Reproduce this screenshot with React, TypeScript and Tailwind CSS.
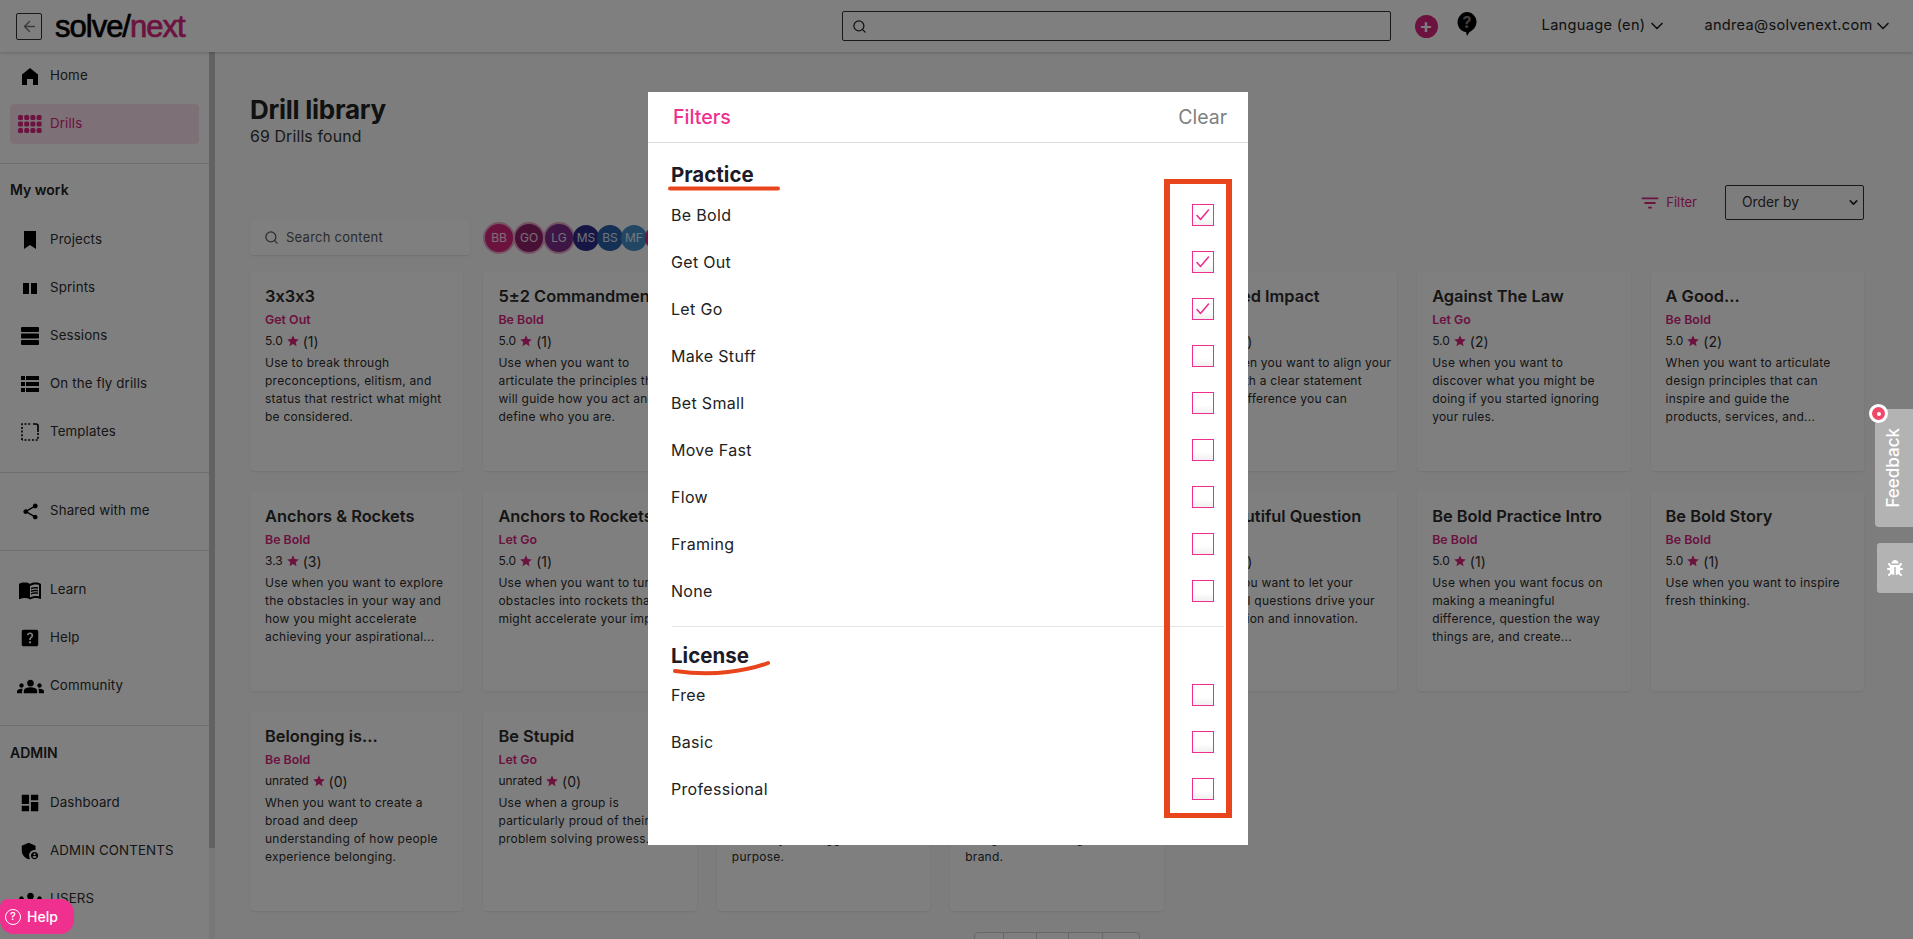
import React from 'react';
import { ArrowLeft, ChevronDown, Search } from 'lucide-react';
import { FaBug } from 'react-icons/fa';
import { MdAdminPanelSettings, MdDashboard, MdFilterList, MdGroups, MdHelpCenter, MdMenuBook, MdShare, MdStar } from 'react-icons/md';

type Drill = { title: string; tag: string; score: string; count: number; lines: string[] };

const drills: Drill[] = [
  { title: '3x3x3', tag: 'Get Out', score: '5.0', count: 1, lines: ['Use to break through', 'preconceptions, elitism, and', 'status that restrict what might', 'be considered.'] },
  { title: '5±2 Commandments', tag: 'Be Bold', score: '5.0', count: 1, lines: ['Use when you want to', 'articulate the principles that', 'will guide how you act and', 'define who you are.'] },
  { title: 'A Brand Story', tag: 'Be Bold', score: '5.0', count: 1, lines: ['Use when you want to tell', 'the story of your team', 'and how it came to be', 'here.'] },
  { title: 'A Clear Purpose', tag: 'Be Bold', score: '5.0', count: 1, lines: ['Use when you want to', 'define a clear direction', 'for your team and', 'purpose.'] },
  { title: 'Defined Impact', tag: 'Be Bold', score: '5.0', count: 1, lines: ['Use when you want to align your', 'team with a clear statement', 'of the difference you can', 'make.'] },
  { title: 'Against The Law', tag: 'Let Go', score: '5.0', count: 2, lines: ['Use when you want to', 'discover what you might be', 'doing if you started ignoring', 'your rules.'] },
  { title: 'A Good...', tag: 'Be Bold', score: '5.0', count: 2, lines: ['When you want to articulate', 'design principles that can', 'inspire and guide the', 'products, services, and...'] },
  { title: 'Anchors & Rockets', tag: 'Be Bold', score: '3.3', count: 3, lines: ['Use when you want to explore', 'the obstacles in your way and', 'how you might accelerate', 'achieving your aspirational...'] },
  { title: 'Anchors to Rockets', tag: 'Let Go', score: '5.0', count: 1, lines: ['Use when you want to turn', 'obstacles into rockets that', 'might accelerate your impact.'] },
  { title: 'Assumption Flip', tag: 'Let Go', score: '5.0', count: 1, lines: ['Use when you want to flip', 'the beliefs that hold you', 'back from new ideas.'] },
  { title: 'Bad Ideas', tag: 'Get Out', score: '5.0', count: 1, lines: ['Use when you want to', 'open up your thinking', 'and find better ideas.'] },
  { title: 'A Beautiful Question', tag: 'Be Bold', score: '5.0', count: 1, lines: ['When you want to let your', 'powerful questions drive your', 'exploration and innovation.'] },
  { title: 'Be Bold Practice Intro', tag: 'Be Bold', score: '5.0', count: 1, lines: ['Use when you want focus on', 'making a meaningful', 'difference, question the way', 'things are, and create...'] },
  { title: 'Be Bold Story', tag: 'Be Bold', score: '5.0', count: 1, lines: ['Use when you want to inspire', 'fresh thinking.'] },
  { title: 'Belonging is...', tag: 'Be Bold', score: 'unrated', count: 0, lines: ['When you want to create a', 'broad and deep', 'understanding of how people', 'experience belonging.'] },
  { title: 'Be Stupid', tag: 'Let Go', score: 'unrated', count: 0, lines: ['Use when a group is', 'particularly proud of their', 'problem solving prowess.'] },
  { title: 'Be The Change', tag: 'Be Bold', score: '5.0', count: 1, lines: ['Use when you want to', 'connect what you do', 'each day to a bigger', 'purpose.'] },
  { title: 'Big Brand Bets', tag: 'Be Bold', score: '5.0', count: 1, lines: ['Use when you want to', 'test what sets you apart', 'and grow the strength of', 'brand.'] },
];

const practices = ['Be Bold', 'Get Out', 'Let Go', 'Make Stuff', 'Bet Small', 'Move Fast', 'Flow', 'Framing', 'None'];
const licenses = ['Free', 'Basic', 'Professional'];

const HomeIcon = () => (
  <svg width="16" height="17" viewBox="0 0 16 17" fill="currentColor"><path d="M8 0 16 6.5V17H11V11H5V17H0V6.5Z" /></svg>
);
const BookmarkIcon = () => (
  <svg width="14" height="18" viewBox="0 0 14 18" fill="currentColor"><path d="M1 0H13V18L7 14 1 18Z" /></svg>
);
const SprintIcon = () => (
  <svg width="14" height="11" viewBox="0 0 14 11" fill="currentColor"><rect width="6" height="11" /><rect x="8" width="6" height="11" /></svg>
);
const SessionIcon = () => (
  <svg width="18" height="18" viewBox="0 0 18 18" fill="currentColor"><rect width="18" height="5" rx="1" /><rect y="6.5" width="18" height="5" rx="1" /><rect y="13" width="18" height="5" rx="1" /></svg>
);
const ListIcon = () => (
  <svg width="18" height="16" viewBox="0 0 18 16" fill="currentColor">
    <rect width="4" height="4" /><rect x="5" width="13" height="4" />
    <rect y="6" width="4" height="4" /><rect x="5" y="6" width="13" height="4" />
    <rect y="12" width="4" height="4" /><rect x="5" y="12" width="13" height="4" />
  </svg>
);
const TemplateIcon = () => (
  <svg width="18" height="18" viewBox="0 0 18 18" fill="none" stroke="currentColor" strokeWidth="1.6">
    <path d="M1 17V1H11" strokeDasharray="2 1.7" />
    <path d="M12 1H15Q17 1 17 3V9" />
    <path d="M17 10V17H1" strokeDasharray="2 1.7" />
  </svg>
);
const DrillsIcon = () => (
  <svg width="24" height="18" viewBox="0 0 24 18" fill="currentColor">
    {[0, 6.5, 13].map(y => [0, 6.2, 12.4, 18.6].map(x => <rect key={`${x}-${y}`} x={x} y={y} width="5" height="5" rx="1.5" />))}
  </svg>
);
const QuestionBubble = () => (
  <svg width="20" height="24" viewBox="0 0 20 24">
    <path d="M10 0C15 0 19.5 4.5 19.5 10S15 19 12.5 20L10 24 9 20C4 19.5.5 15 .5 10S5 0 10 0Z" fill="#000" />
    <text x="10" y="16" textAnchor="middle" fontSize="16" fontWeight="700" fill="#808080" fontFamily="Inter, sans-serif">?</text>
  </svg>
);

const NavRow = ({ icon, label, active }: { icon: React.ReactNode; label: string; active?: boolean }) => (
  <div className="h-[48px] flex items-center px-[10px]">
    <div className={`w-[190px] h-[40px] rounded-[4px] flex items-center ${active ? 'bg-[#fbe0ed] text-[#d8247f]' : 'text-[#2c2c2c]'}`}>
      <span className={`w-[40px] flex justify-center shrink-0 ${active ? '' : 'text-black'}`}>{icon}</span>
      <span className="text-[13.3px] tracking-[0.01em]">{label}</span>
    </div>
  </div>
);

const Card = ({ drill }: { drill: Drill }) => (
  <div className="bg-white rounded-[4px] shadow-[0_1px_2px_rgba(0,0,0,0.08)] px-[15px] pt-[13px] overflow-hidden">
    <h3 className="h-[24px] leading-[24px] text-[16.4px] font-semibold text-[#2b2b2b] whitespace-nowrap">{drill.title}</h3>
    <p className="h-[23px] leading-[23px] text-[12.4px] font-semibold text-[#d8247f]">{drill.tag}</p>
    <div className="mt-[1px] h-[18px] flex items-center gap-[3px] text-[12px] text-[#2b2b2b]">
      <span>{drill.score}</span>
      <MdStar className="w-[14px] h-[14px] text-[#d8247f]" />
      <span className="text-[14px]">({drill.count})</span>
    </div>
    <div className="mt-[4px] text-[12px] leading-[18px] text-[#2b2b2b] tracking-[0.02em]">
      {drill.lines.map(line => <div key={line} className="whitespace-nowrap">{line}</div>)}
    </div>
  </div>
);

const Avatar = ({ text, color, selected }: { text: string; color: string; selected?: boolean }) => (
  <div className={`shrink-0 rounded-full flex items-center justify-center text-[12px] text-white/85 ${selected ? 'w-[32px] h-[32px] -mr-[2px] border-2 border-[#e9a8c8]' : 'w-[26px] h-[26px] -mr-[2px]'}`} style={{ backgroundColor: color }}>
    {text}
  </div>
);

const FilterRow = ({ label, checked }: { label: string; checked?: boolean }) => (
  <div className="h-[47px] flex items-center justify-between pr-[10px]">
    <span className="text-[16px] text-[#222] tracking-[0.02em]">{label}</span>
    <span className="w-[22px] h-[22px] border border-[#ee2f8f] bg-gradient-to-b from-white from-60% to-[#efefef] flex items-center justify-center">
      {checked && (
        <svg width="14" height="12" viewBox="0 0 14 12" fill="none" stroke="#ee2f8f" strokeWidth="1.6" strokeLinecap="round" strokeLinejoin="round"><path d="M1 6.5 4.5 10.5 12.5 1" /></svg>
      )}
    </span>
  </div>
);

const App = () => {
  return (
    <div className="relative w-full h-[939px] overflow-hidden bg-[#fafafa] font-[Inter,sans-serif] [font-feature-settings:'calt'_0]">
      <header className="relative z-10 h-[52px] bg-white shadow-[0_1px_3px_rgba(0,0,0,0.2)] flex items-center pl-[16px]">
        <button className="w-[26px] h-[27px] border border-[#333] rounded-[2px] flex items-center justify-center text-[#777]"><ArrowLeft className="w-[17px] h-[17px]" /></button>
        <div className="ml-[13px] text-[31px] tracking-[-1px] leading-none font-['Liberation_Sans',sans-serif] [-webkit-text-stroke:0.7px] text-black">solve/<span className="text-[#d8247f]">next</span></div>
        <div className="ml-[657px] w-[549px] h-[30px] border border-[#333] rounded-[2px] bg-white flex items-center pl-[9px]"><Search className="w-[15px] h-[15px] text-[#222]" /></div>
        <span className="ml-[24px] w-[23px] h-[23px] rounded-full bg-[#d8247f] flex items-center justify-center text-white text-[20px] leading-none font-semibold">+</span>
        <span className="ml-[19px] -mt-[4px] flex"><QuestionBubble /></span>
        <span className="ml-[65px] text-[14.6px] tracking-[0.02em] text-[#222] whitespace-nowrap">Language (en)</span>
        <ChevronDown className="ml-[2px] w-[20px] h-[20px] text-[#222]" />
        <span className="ml-[37px] text-[14.6px] tracking-[0.02em] text-[#222] whitespace-nowrap">andrea@solvenext.com</span>
        <ChevronDown className="w-[20px] h-[20px] text-[#222]" />
      </header>

      <div className="flex h-[887px]">
        <aside className="w-[209px] shrink-0 bg-white overflow-hidden">
          <div className="pb-[15px] border-b border-[#dcdcdc]">
            <NavRow icon={<HomeIcon />} label="Home" />
            <NavRow icon={<DrillsIcon />} label="Drills" active />
          </div>
          <div className="pb-[16px] border-b border-[#dcdcdc]">
            <div className="h-[50px] flex items-center pl-[10px] text-[14px] font-semibold text-[#222]">My work</div>
            <div className="pt-[2px]">
              <NavRow icon={<BookmarkIcon />} label="Projects" />
              <NavRow icon={<SprintIcon />} label="Sprints" />
              <NavRow icon={<SessionIcon />} label="Sessions" />
              <NavRow icon={<ListIcon />} label="On the fly drills" />
              <NavRow icon={<TemplateIcon />} label="Templates" />
            </div>
          </div>
          <div className="pt-[14px] pb-[15px] border-b border-[#dcdcdc]">
            <NavRow icon={<MdShare className="w-[19px] h-[19px]" />} label="Shared with me" />
          </div>
          <div className="pt-[15px] pb-[15px] border-b border-[#dcdcdc]">
            <NavRow icon={<MdMenuBook className="w-[24px] h-[24px]" />} label="Learn" />
            <NavRow icon={<MdHelpCenter className="w-[22px] h-[22px]" />} label="Help" />
            <NavRow icon={<MdGroups className="w-[27px] h-[27px]" />} label="Community" />
          </div>
          <div>
            <div className="h-[52px] flex items-center pl-[10px] text-[14px] font-semibold text-[#222]">ADMIN</div>
            <div className="pt-px">
              <NavRow icon={<MdDashboard className="w-[22px] h-[22px]" />} label="Dashboard" />
              <NavRow icon={<MdAdminPanelSettings className="w-[22px] h-[22px]" />} label="ADMIN CONTENTS" />
              <NavRow icon={<MdGroups className="w-[27px] h-[27px]" />} label="USERS" />
            </div>
          </div>
        </aside>
        <div className="w-[6px] shrink-0 bg-[#f1f1f1]"><div className="h-[796px] bg-[#c4c4c4]" /></div>

        <main className="flex-1 min-w-0 pl-[35px] pr-[49px] pt-[42px]">
          <h1 className="h-[32px] leading-[32px] text-[26px] font-bold tracking-[-0.01em] text-[#222]">Drill library</h1>
          <p className="h-[21px] leading-[21px] text-[15.8px] tracking-[0.01em] text-[#333]">69 Drills found</p>
          <div className="mt-[38px] h-[35px] flex items-center justify-end">
            <MdFilterList className="w-[22px] h-[22px] text-[#d8247f]" />
            <span className="ml-[5px] text-[13px] text-[#d8247f]">Filter</span>
            <div className="ml-[28px] w-[139px] h-[35px] border border-[#333] rounded-[2px] flex items-center justify-between pl-[16px] pr-[3px] text-[13.8px] text-[#333]">
              Order by
              <ChevronDown className="w-[13px] h-[13px] text-[#222]" strokeWidth={3} />
            </div>
          </div>
          <div className="h-[35px] flex items-center">
            <div className="w-[220px] h-[35px] bg-white rounded-[3px] shadow-[0_1px_2px_rgba(0,0,0,0.1)] flex items-center pl-[14px] text-[#555]">
              <Search className="w-[15px] h-[15px]" />
              <span className="ml-[7px] text-[13px] tracking-[0.02em]">Search content</span>
            </div>
            <div className="ml-[13px] flex items-center">
              <Avatar text="BB" color="#d8247f" selected />
              <Avatar text="GO" color="#92206c" selected />
              <Avatar text="LG" color="#7a2c8c" selected />
              <Avatar text="MS" color="#2c2c8c" />
              <Avatar text="BS" color="#2860a8" />
              <Avatar text="MF" color="#448ec8" />
              <Avatar text="MS" color="#d02a84" />
            </div>
          </div>
          <div className="mt-[16px] grid grid-cols-7 gap-5 auto-rows-[200px]">
            {drills.map(d => <Card key={d.title} drill={d} />)}
          </div>
          <div className="mt-[21px] flex justify-center">
            <div className="flex h-[30px] border border-[#cfcfcf] rounded-t-[4px] bg-white">
              <span className="w-[29px] border-r border-[#cfcfcf]" />
              <span className="w-[33px] border-r border-[#cfcfcf]" />
              <span className="w-[32px] border-r border-[#cfcfcf]" />
              <span className="w-[34px] border-r border-[#cfcfcf]" />
              <span className="w-[36px]" />
            </div>
          </div>
        </main>
      </div>

      {/* dialog backdrop and dialog */}
      <div className="absolute inset-0 z-20 bg-black/50 pt-[92px] pl-[648px]">
        <div className="relative w-[600px] h-[753px] bg-white">
          <div className="h-[51px] border-b border-[#dedede] flex items-center justify-between pl-[25px] pr-[21px] pt-[2px]">
            <span className="text-[19.6px] font-medium text-[#ee2f8f]">Filters</span>
            <span className="text-[19.5px] text-[#808080]">Clear</span>
          </div>
          <div className="pl-[23px] pr-[24px] pt-[16px]">
            <h2 className="h-[32px] text-[20.5px] leading-[31px] font-bold text-[#1c1c28]">Practice</h2>
            {practices.map((p, i) => <FilterRow key={p} label={p} checked={i < 3} />)}
            <div className="mt-[12px] ml-px border-t border-[#e4e4e4]" />
            <h2 className="mt-[13px] h-[31px] text-[20.5px] leading-[31px] font-bold text-[#1c1c28]">License</h2>
            {licenses.map(l => <FilterRow key={l} label={l} />)}
          </div>

          {/* red annotations drawn on the screenshot */}
          <svg className="absolute left-[20px] top-[94px]" width="112" height="5"><path d="M2 2.5H110" stroke="#e9451c" strokeWidth="4" strokeLinecap="round" /></svg>
          <svg className="absolute left-[25px] top-[568px]" width="98" height="16" fill="none"><path d="M2 11Q30 15 55 12T95 3" stroke="#e9451c" strokeWidth="4" strokeLinecap="round" /></svg>
          <div className="absolute left-[516px] top-[87px] w-[68px] h-[639px] border-y-[5px] border-x-[6px] border-[#e9451c]" />
        </div>
      </div>

      <button className="absolute z-30 left-0 top-[899px] w-[74px] h-[35px] bg-[#f0308f] rounded-tr-[14px] rounded-br-[14px] rounded-bl-[14px] rounded-tl-[8px] flex items-center pl-[5px] gap-[6px] text-white text-[14px] font-medium">
        <span className="w-[16px] h-[16px] border border-white rounded-full flex items-center justify-center text-[11px] leading-none">?</span>
        Help
      </button>

      <div className="absolute z-30 right-0 top-[409px] w-[38px] h-[118px] bg-[#b3b3b3] rounded-l-[4px] flex items-center justify-center">
        <span className="[writing-mode:vertical-rl] rotate-180 text-white text-[17px] font-medium">Feedback</span>
      </div>
      <div className="absolute z-40 left-[1869px] top-[404px] w-[19px] h-[19px] rounded-full bg-[#f04868] border-[3px] border-white flex items-center justify-center">
        <span className="w-[4px] h-[4px] rounded-full bg-white" />
      </div>
      <div className="absolute z-30 right-0 top-[543px] w-[36px] h-[50px] bg-[#b3b3b3] rounded-l-[3px] flex items-center justify-center">
        <FaBug className="w-[16px] h-[16px] text-white" />
      </div>
    </div>
  );
};

export default App;
